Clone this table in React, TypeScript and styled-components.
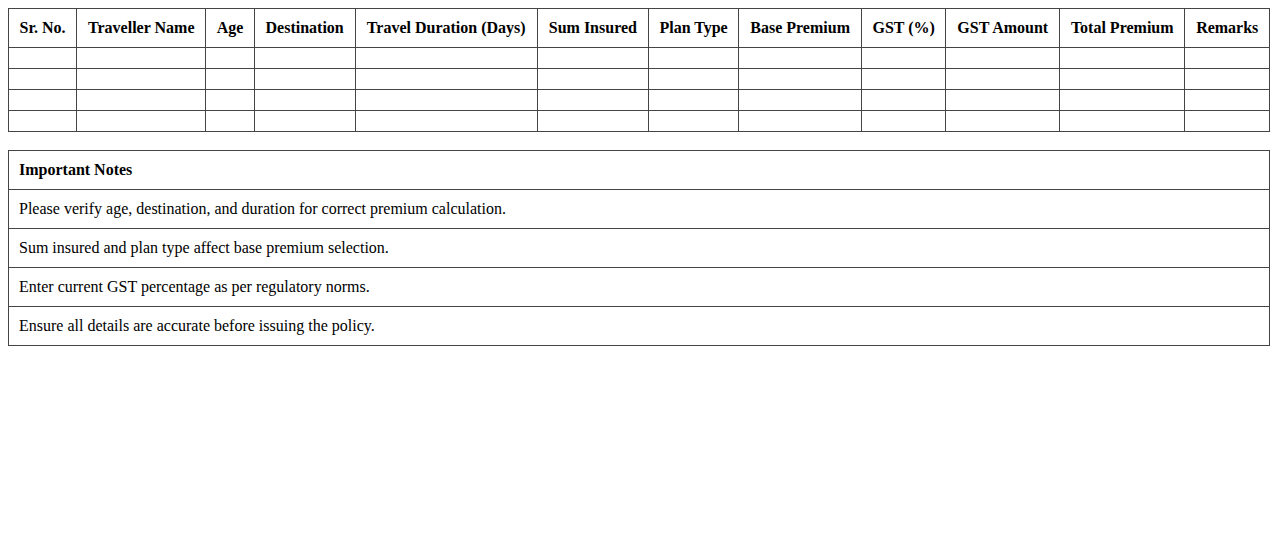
import React from 'react';
import styled, { createGlobalStyle } from 'styled-components';

const GlobalStyle = createGlobalStyle`
  body {
    margin: 8px;
    font-family: "Liberation Serif", "Times New Roman", serif;
    font-size: 16px;
    color: #000;
    background: #fff;
  }
`;

const Table = styled.table`
  width: 100%;
  border-collapse: collapse;
  & + & {
    margin-top: 18px;
  }
`;

const Cell = styled.td<{ $head?: boolean }>`
  border: 1px solid #444;
  padding: 10px;
  text-align: left;
  font-weight: ${props => (props.$head ? 'bold' : 'normal')};
`;

const HeadCell = styled.th`
  border: 1px solid #444;
  padding: 10px;
  font-weight: bold;
  text-align: center;
  white-space: nowrap;
`;

const columns = [
  'Sr. No.',
  'Traveller Name',
  'Age',
  'Destination',
  'Travel Duration (Days)',
  'Sum Insured',
  'Plan Type',
  'Base Premium',
  'GST (%)',
  'GST Amount',
  'Total Premium',
  'Remarks',
];

const notes = [
  'Please verify age, destination, and duration for correct premium calculation.',
  'Sum insured and plan type affect base premium selection.',
  'Enter current GST percentage as per regulatory norms.',
  'Ensure all details are accurate before issuing the policy.',
];

const App: React.FC = () => {
  return (
    <>
      <GlobalStyle />
      <Table>
        <thead>
          <tr>
            {columns.map(c => (
              <HeadCell key={c}>{c}</HeadCell>
            ))}
          </tr>
        </thead>
        <tbody>
          {[0, 1, 2, 3].map(r => (
            <tr key={r}>
              {columns.map(c => (
                <Cell key={c} />
              ))}
            </tr>
          ))}
        </tbody>
      </Table>
      <Table>
        <tbody>
          <tr>
            <Cell $head>Important Notes</Cell>
          </tr>
          {notes.map(n => (
            <tr key={n}>
              <Cell>{n}</Cell>
            </tr>
          ))}
        </tbody>
      </Table>
    </>
  );
};

export default App;
